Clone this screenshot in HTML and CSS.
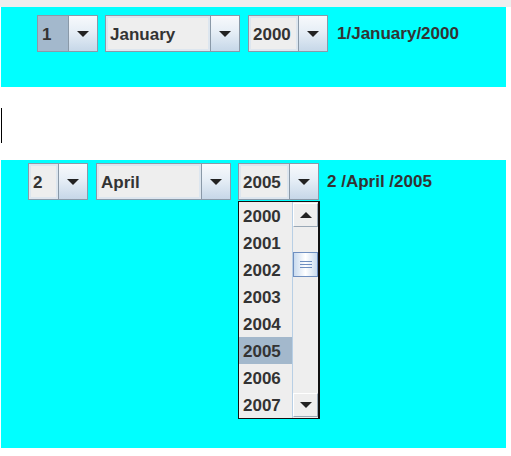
FILE: index.html
```html
<!DOCTYPE html>
<html>
<head>
<meta charset="utf-8">
<link rel="stylesheet" href="styles.css">
</head>
<body>
<div class="topstrip"></div>
<div class="panel panel-one">
  <div class="combo w61 focused">
    <div class="field">1</div>
    <div class="btn"><span class="arrow"></span></div>
  </div>
  <div class="combo w135 gap7">
    <div class="field">January</div>
    <div class="btn"><span class="arrow"></span></div>
  </div>
  <div class="combo w80 gap8">
    <div class="field">2000</div>
    <div class="btn"><span class="arrow"></span></div>
  </div>
  <div class="label gap9">1/January/2000</div>
</div>
<div class="spacer"><span class="caret"></span></div>
<div class="panel panel-two">
  <div class="combo w60">
    <div class="field">2</div>
    <div class="btn"><span class="arrow"></span></div>
  </div>
  <div class="combo w135 gap8">
    <div class="field">April</div>
    <div class="btn"><span class="arrow"></span></div>
  </div>
  <div class="combo w81 gap7 open">
    <div class="field">2005</div>
    <div class="btn"><span class="arrow"></span></div>
    <div class="popup">
      <ul class="list">
        <li>2000</li>
        <li>2001</li>
        <li>2002</li>
        <li>2003</li>
        <li>2004</li>
        <li class="sel">2005</li>
        <li>2006</li>
        <li>2007</li>
      </ul>
      <div class="scrollbar">
        <div class="sbtn"><span class="arrow up"></span></div>
        <div class="track">
          <div class="thumb"><span></span><span></span><span></span></div>
        </div>
        <div class="sbtn"><span class="arrow"></span></div>
      </div>
    </div>
  </div>
  <div class="label gap8">2 /April /2005</div>
</div>
</body>
</html>
```
FILE: styles.css
```css
html, body {
  margin: 0;
  padding: 0;
  background: #ffffff;
}
body {
  width: 511px;
  height: 456px;
  overflow: hidden;
  font-family: "Liberation Sans", Arial, sans-serif;
  font-weight: bold;
  font-size: 17px;
  color: #333333;
}
.topstrip {
  height: 7px;
  background: #eeeeee;
}
.panel {
  margin-left: 1px;
  width: 505px;
  background: #00ffff;
  display: flex;
  align-items: flex-start;
  box-sizing: border-box;
}
.panel-one {
  height: 80px;
  padding: 8px 0 0 36px;
}
.panel-two {
  height: 288px;
  padding: 3px 0 0 27px;
}
.spacer {
  height: 73px;
  position: relative;
}
.caret {
  position: absolute;
  left: 1px;
  top: 21px;
  width: 1px;
  height: 35px;
  background: #000000;
}
.combo {
  position: relative;
  height: 37px;
  box-sizing: border-box;
  border: 1px solid #8a99a8;
  display: flex;
}
.w60 { width: 60px; }
.w61 { width: 61px; }
.w80 { width: 80px; }
.w81 { width: 81px; }
.w135 { width: 135px; }
.gap7 { margin-left: 7px; }
.gap8 { margin-left: 8px; }
.gap9 { margin-left: 9px; }
.field {
  flex: 1;
  background: #eeeeee;
  border: 2px solid #dde6ef;
  padding-left: 2px;
  padding-top: 1px;
  display: flex;
  align-items: center;
  line-height: 1;
}
.focused .field {
  background: #a3b8cc;
  border-color: #a3b8cc;
}
.btn {
  width: 28px;
  border-left: 1px solid #8a99a8;
  background: linear-gradient(to bottom, #f7f9fc 0%, #e6eef6 45%, #c6d7e8 100%);
  display: flex;
  align-items: center;
  justify-content: center;
}
.arrow {
  width: 0;
  height: 0;
  border-left: 6px solid transparent;
  border-right: 6px solid transparent;
  border-top: 6px solid #222222;
}
.arrow.up {
  border-top: 0;
  border-bottom: 6px solid #222222;
}
.label {
  height: 37px;
  display: flex;
  align-items: center;
}
.popup {
  position: absolute;
  left: -1px;
  top: 37px;
  width: 82px;
  height: 218px;
  box-sizing: border-box;
  border: 1px solid #111111;
  border-right-width: 2px;
  background: #eeeeee;
  display: flex;
}
.list {
  list-style: none;
  margin: 0;
  padding: 0;
  width: 53px;
}
.list li {
  height: 27px;
  display: flex;
  align-items: center;
  padding-left: 4px;
  padding-top: 1px;
  box-sizing: border-box;
  line-height: 1;
}
.list li.sel {
  background: #a3b8cc;
}
.scrollbar {
  flex: 1;
  border-left: 1px solid #b8cfe5;
  display: flex;
  flex-direction: column;
  padding: 1px 0;
  box-sizing: border-box;
}
.sbtn {
  height: 24px;
  box-sizing: border-box;
  border: 1px solid #9aa8b6;
  border-left-color: #ffffff;
  border-top-color: #ffffff;
  background: #eeeeee;
  display: flex;
  align-items: center;
  justify-content: center;
}
.track {
  flex: 1;
  background: #eeeeee;
  position: relative;
}
.thumb {
  position: absolute;
  left: 0;
  right: 0;
  top: 25px;
  height: 25px;
  box-sizing: border-box;
  border: 1px solid #6f8fc0;
  background: linear-gradient(to right, #c9dbef 0%, #ffffff 50%, #c9dbef 100%);
  display: flex;
  flex-direction: column;
  align-items: center;
  justify-content: center;
  gap: 2px;
}
.thumb span {
  width: 12px;
  height: 1px;
  background: #6f8fc0;
}
```
